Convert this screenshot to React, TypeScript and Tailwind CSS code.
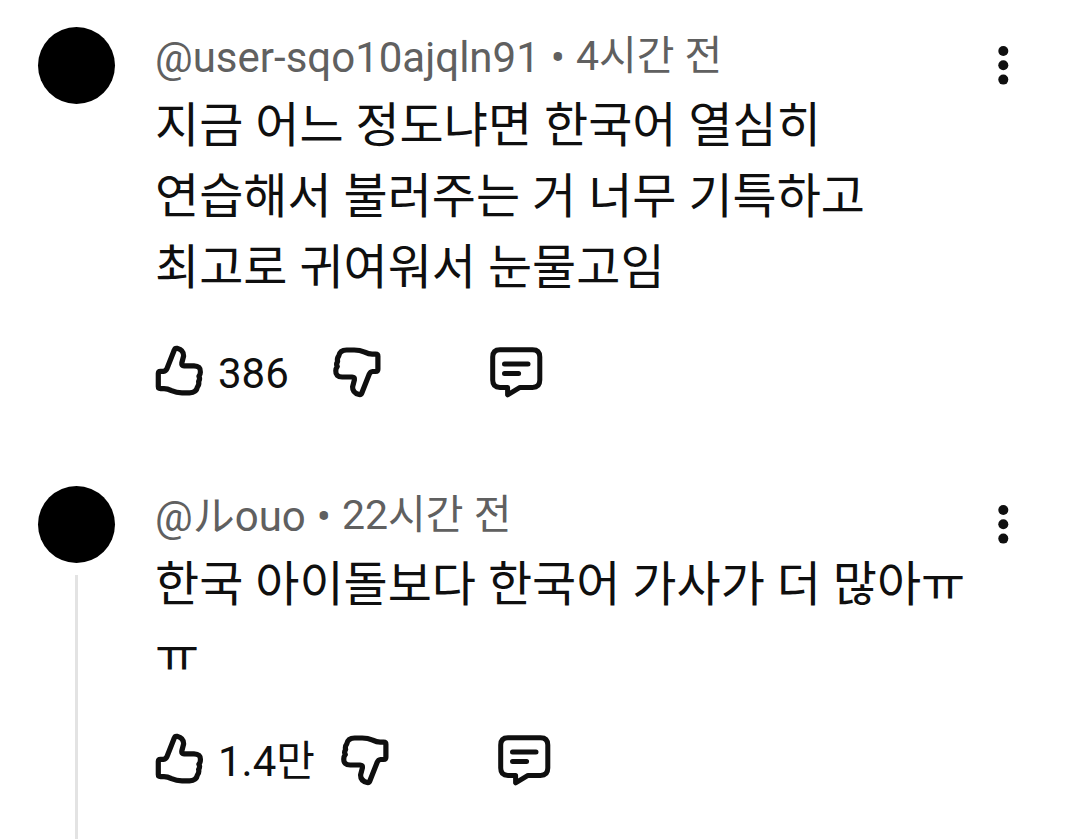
import { useState } from 'react';

const THUMB =
    'M8.5 28.3H11.5Q14 28 15 25.5L22.3 7Q23 5 25 5.3Q31.8 7 31.6 13L29.8 20Q29.4 22.8 32 22.8H42Q48.8 23 48.4 29Q48.4 31.5 46.9 33.2Q48.4 35.8 46.6 38.4Q47.4 41.5 45.4 44Q44.4 49.6 37.5 49.8H30Q24.5 49.8 19.5 47.6Q15.5 45.6 12 45.6H8.5Q6.3 45.6 6.3 43.6V30.5Q6.3 28.3 8.5 28.3Z';

function ThumbIcon({ down = false }) {
    return (
        <svg
            className="size-[54px]"
            viewBox="0 0 54 54"
            fill="none"
            stroke="currentColor"
            strokeWidth="5.2"
            strokeLinejoin="round"
            overflow="visible"
            aria-hidden="true"
        >
            <path d={THUMB} transform={down ? 'rotate(180 26.6 28.4)' : undefined} />
        </svg>
    );
}

function ReplyIcon() {
    return (
        <svg
            className="size-[54px]"
            viewBox="0 0 54 54"
            fill="none"
            stroke="currentColor"
            strokeWidth="5"
            strokeLinecap="round"
            strokeLinejoin="round"
            overflow="visible"
            aria-hidden="true"
        >
            <path d="M10 6.7H42.5Q49.8 6.7 49.8 14V37Q49.8 44.4 42.5 44.4H30L17.6 51.8V44.4H10Q2.7 44.4 2.7 37V14Q2.7 6.7 10 6.7Z" />
            <path d="M14.5 21H38M14.5 30.6H28.6" />
        </svg>
    );
}

function MoreIcon() {
    return (
        <svg className="h-10 w-5" viewBox="0 0 20 40" fill="currentColor" aria-hidden="true">
            <circle cx="10.3" cy="6" r="5" />
            <circle cx="10.3" cy="20.3" r="5" />
            <circle cx="10.3" cy="34.6" r="5" />
        </svg>
    );
}

const comments = [
    {
        author: '@user-sqo10ajqln91',
        time: '4시간 전',
        text: '지금 어느 정도냐면 한국어 열심히\n연습해서 불러주는 거 너무 기특하고\n최고로 귀여워서 눈물고임',
        likes: '386',
        hasThread: false,
    },
    {
        author: '@ルouo',
        time: '22시간 전',
        text: '한국 아이돌보다 한국어 가사가 더 많아ㅠ\nㅠ',
        likes: '1.4만',
        hasThread: true,
    },
];

function Comment({ author, time, text, likes, hasThread }) {
    const [liked, setLiked] = useState(false);

    return (
        <article className="flex">
            <div className="flex w-[77px] shrink-0 flex-col items-center">
                <div className="size-[77px] shrink-0 rounded-full bg-black" />
                {hasThread && <div className="mt-3 w-[3px] grow bg-[#e3e3e3]" />}
            </div>
            <div className="ml-10 min-w-0 grow pb-[89px]">
                <header className="flex h-[60px] items-center gap-[11px] whitespace-nowrap text-[42px] text-[#606060]">
                    <a href="#">{author}</a>
                    <span>•</span>
                    <time className="text-[41px]">{time}</time>
                </header>
                <p className="mt-[3px] whitespace-pre text-[48px] leading-[71px]">{text}</p>
                <div className="-ml-[3px] mt-10 flex h-[54px] items-center">
                    <button type="button" aria-label="좋아요" aria-pressed={liked} onClick={() => setLiked(!liked)}>
                        <ThumbIcon />
                    </button>
                    <span className="ml-3 mr-6 min-w-[89px] whitespace-nowrap pt-2 text-[42px] leading-[54px]">
                        {likes}
                    </span>
                    <button type="button" aria-label="싫어요">
                        <ThumbIcon down />
                    </button>
                    <button type="button" aria-label="답글" className="ml-[105px]">
                        <ReplyIcon />
                    </button>
                </div>
            </div>
            <button type="button" aria-label="더보기" className="mt-[18px] shrink-0 self-start">
                <MoreIcon />
            </button>
        </article>
    );
}

export default function App() {
    return (
        <main
            lang="ko"
            className="h-screen overflow-hidden bg-white pl-[38px] pr-[67px] pt-[27px] font-[Roboto,'Noto_Sans_CJK_KR',sans-serif] text-[#0f0f0f]"
        >
            {comments.map((comment) => (
                <Comment key={comment.author} {...comment} />
            ))}
        </main>
    );
}
